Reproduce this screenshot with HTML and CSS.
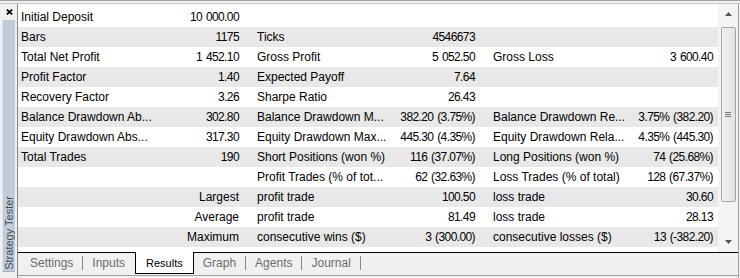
FILE: index.html
```html
<!DOCTYPE html>
<html lang="en">

<head>
    <meta charset="UTF-8">
    <meta name="viewport" content="width=device-width, initial-scale=1.0">
    <title>Strategy Tester - Results</title>
    <link rel="stylesheet" href="styles.css">
</head>

<body>
    <section class="tester">
        <div class="top-rule"></div>
        <div class="frame">
            <!-- side bar -->
            <aside class="side">
                <div class="close">
                    <svg width="7" height="6" viewBox="0 0 7 6">
                        <path d="M0.8 0.6 L6.2 5.4 M6.2 0.6 L0.8 5.4" stroke="#000" stroke-width="1.7" fill="none" />
                    </svg>
                </div>
                <div class="side-strip">
                    <span class="side-label">Strategy Tester</span>
                </div>
            </aside>

            <section class="panel">
                <div class="results">
                    <div class="grid">
                        <div class="row">
                            <span class="label">Initial Deposit</span><span class="num">10 000.00</span>
                            <span class="label"></span><span class="num"></span>
                            <span class="label"></span><span class="num"></span>
                        </div>
                        <div class="row">
                            <span class="label">Bars</span><span class="num">1175</span>
                            <span class="label">Ticks</span><span class="num">4546673</span>
                            <span class="label"></span><span class="num"></span>
                        </div>
                        <div class="row">
                            <span class="label">Total Net Profit</span><span class="num">1 452.10</span>
                            <span class="label">Gross Profit</span><span class="num">5 052.50</span>
                            <span class="label">Gross Loss</span><span class="num">3 600.40</span>
                        </div>
                        <div class="row">
                            <span class="label">Profit Factor</span><span class="num">1.40</span>
                            <span class="label">Expected Payoff</span><span class="num">7.64</span>
                            <span class="label"></span><span class="num"></span>
                        </div>
                        <div class="row">
                            <span class="label">Recovery Factor</span><span class="num">3.26</span>
                            <span class="label">Sharpe Ratio</span><span class="num">26.43</span>
                            <span class="label"></span><span class="num"></span>
                        </div>
                        <div class="row">
                            <span class="label">Balance Drawdown Ab...</span><span class="num">302.80</span>
                            <span class="label">Balance Drawdown M...</span><span class="num">382.20 (3.75%)</span>
                            <span class="label">Balance Drawdown Re...</span><span class="num">3.75% (382.20)</span>
                        </div>
                        <div class="row">
                            <span class="label">Equity Drawdown Abs...</span><span class="num">317.30</span>
                            <span class="label">Equity Drawdown Max...</span><span class="num">445.30 (4.35%)</span>
                            <span class="label">Equity Drawdown Rela...</span><span class="num">4.35% (445.30)</span>
                        </div>
                        <div class="row">
                            <span class="label">Total Trades</span><span class="num">190</span>
                            <span class="label">Short Positions (won %)</span><span class="num">116 (37.07%)</span>
                            <span class="label">Long Positions (won %)</span><span class="num">74 (25.68%)</span>
                        </div>
                        <div class="row">
                            <span class="label"></span><span class="num"></span>
                            <span class="label">Profit Trades (% of tot...</span><span class="num">62 (32.63%)</span>
                            <span class="label">Loss Trades (% of total)</span><span class="num">128 (67.37%)</span>
                        </div>
                        <div class="row">
                            <span class="label"></span><span class="num key">Largest</span>
                            <span class="label">profit trade</span><span class="num">100.50</span>
                            <span class="label">loss trade</span><span class="num">30.60</span>
                        </div>
                        <div class="row">
                            <span class="label"></span><span class="num key">Average</span>
                            <span class="label">profit trade</span><span class="num">81.49</span>
                            <span class="label">loss trade</span><span class="num">28.13</span>
                        </div>
                        <div class="row">
                            <span class="label"></span><span class="num key">Maximum</span>
                            <span class="label">consecutive wins ($)</span><span class="num">3 (300.00)</span>
                            <span class="label">consecutive losses ($)</span><span class="num">13 (-382.20)</span>
                        </div>
                    </div>

                    <!-- scroll bar -->
                    <div class="scroll">
                        <div class="scroll-btn">
                            <svg width="7" height="4" viewBox="0 0 7 4"><path d="M0 4 L3.5 0 L7 4 Z" fill="#555" /></svg>
                        </div>
                        <div class="thumb">
                            <span class="grip"></span><span class="grip"></span><span class="grip"></span>
                        </div>
                        <div class="track"></div>
                        <div class="scroll-btn">
                            <svg width="7" height="4" viewBox="0 0 7 4"><path d="M0 0 L7 0 L3.5 4 Z" fill="#555" /></svg>
                        </div>
                    </div>
                </div>

                <!-- tabs -->
                <nav class="tabs">
                    <span class="tab">Settings</span>
                    <span class="sep"></span>
                    <span class="tab">Inputs</span>
                    <span class="tab active">Results</span>
                    <span class="tab">Graph</span>
                    <span class="sep"></span>
                    <span class="tab">Agents</span>
                    <span class="sep"></span>
                    <span class="tab">Journal</span>
                    <span class="sep"></span>
                </nav>
            </section>
        </div>
    </section>
</body>

</html>
```

FILE: styles.css
```css
body {
    margin: 0;
    background: #f0f0f0;
    font-family: "Liberation Sans", Arial, sans-serif;
    font-size: 12px;
    color: #000;
}

.tester {
    width: 740px;
    height: 278px;
    display: flex;
    flex-direction: column;
}

.top-rule {
    height: 2px;
    border-top: 1px solid #a0a0a0;
    border-bottom: 1px solid #c8c8c8;
}

.frame {
    display: flex;
    flex: 1;
}

/* side bar */
.side {
    width: 17px;
    display: flex;
    flex-direction: column;
}

.close {
    height: 16px;
    padding: 5px 0 0 6px;
    box-sizing: border-box;
}

.close svg {
    display: block;
}

.side-strip {
    margin-left: 2px;
    width: 13px;
    height: 252px;
    box-sizing: border-box;
    background: #bfcddb;
    border-left: 1px solid #dde5ee;
    border-bottom: 1px solid #a7b4c1;
    display: flex;
    flex-direction: column;
    justify-content: flex-end;
    padding-bottom: 1px;
}

.side-label {
    writing-mode: vertical-rl;
    transform: rotate(180deg);
    font-size: 11px;
    line-height: 12px;
    color: #3f4a55;
    white-space: nowrap;
}

/* main panel */
.panel {
    flex: 1;
    display: flex;
    flex-direction: column;
    border-left: 1px solid #828790;
    border-right: 1px solid #a0a0a0;
    margin-right: 1px;
}

.results {
    display: flex;
    height: 248px;
    background: #fff;
}

.grid {
    width: 700px;
    padding-top: 3px;
}

.row {
    display: grid;
    grid-template-columns: 135px 100px 136px 100px 136px 93px;
    height: 20px;
    line-height: 20px;
}

.row:nth-child(even) {
    background: #e8e8e8;
}

.row span {
    white-space: nowrap;
    overflow: hidden;
}

.label {
    padding-left: 4px;
}

.row .label:first-child {
    padding-left: 3px;
}

.num {
    text-align: right;
    padding-right: 14px;
    letter-spacing: -0.6px;
    word-spacing: 1px;
}

.num.key {
    letter-spacing: 0;
    word-spacing: 0;
}

.row .num:last-child {
    padding-right: 5px;
}

/* scroll bar */
.scroll {
    width: 20px;
    background: #f4f4f4;
    display: flex;
    flex-direction: column;
    align-items: center;
}

.scroll-btn {
    height: 20px;
    display: flex;
    align-items: center;
    justify-content: center;
}

.thumb {
    width: 13px;
    height: 173px;
    margin-top: 3px;
    border: 1px solid #a5a5a5;
    border-radius: 2px;
    background: linear-gradient(to right, #f2f2f2, #e2e2e2);
    display: flex;
    flex-direction: column;
    align-items: center;
    justify-content: center;
    gap: 1px;
}

.grip {
    width: 6px;
    height: 1px;
    background: #777;
}

.track {
    flex: 1;
}

/* tabs */
.tabs {
    height: 22px;
    border-top: 1px solid #000;
    border-bottom: 1px solid #a0a0a0;
    display: flex;
    align-items: flex-start;
    padding-left: 3px;
}

.tab {
    padding: 0 9px;
    line-height: 20px;
    color: #6d6d6d;
}

.tab.active {
    margin: -1px 0 0 1px;
    padding: 1px 10px 0;
    background: #fff;
    border: 1px solid #000;
    border-top: 0;
    font-size: 11px;
    color: #000;
}

.sep {
    width: 1px;
    height: 14px;
    margin-top: 3px;
    background: #8a8a8a;
}
```
